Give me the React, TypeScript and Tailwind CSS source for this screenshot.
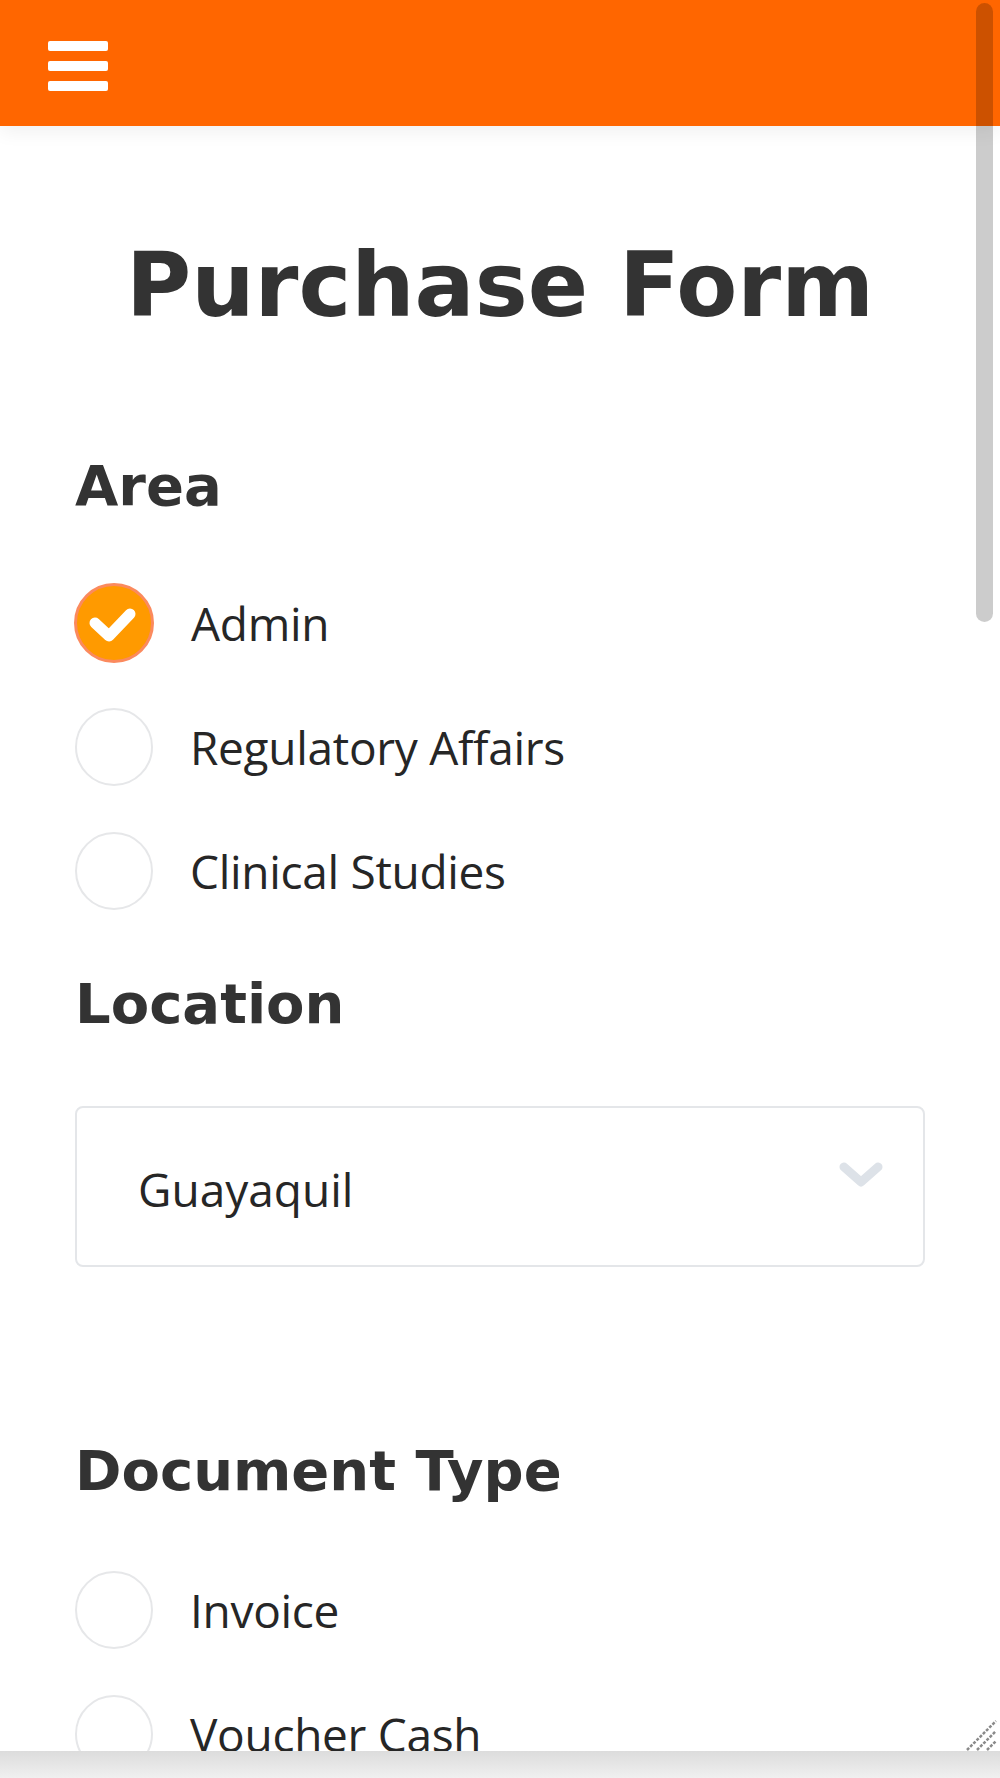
import React, { useState } from 'react';

const areas = ['Admin', 'Regulatory Affairs', 'Clinical Studies'];
const docTypes = ['Invoice', 'Voucher Cash'];

const headingFont = { fontFamily: '"DejaVu Sans", sans-serif' };
const bodyFont = { fontFamily: '"Open Sans", "Noto Sans", sans-serif' };

const Radio: React.FC<{ label: string; checked: boolean; onClick: () => void }> = ({ label, checked, onClick }) => (
  <div className="flex items-center h-[78px] cursor-pointer" onClick={onClick}>
    {checked ? (
      <div className="w-[80px] h-[80px] -ml-px rounded-full bg-[#ff9a00] border-[3px] border-[#fb8a5e] flex items-center justify-center shrink-0">
        <svg width="80" height="80" viewBox="0 0 80 80" className="-m-[3px]">
          <path d="M21 40 L35 53 L56 31" fill="none" stroke="#fff" strokeWidth="11" strokeLinecap="round" strokeLinejoin="round" />
        </svg>
      </div>
    ) : (
      <div className="w-[78px] h-[78px] rounded-full border-2 border-[#e6e7e9] bg-white shrink-0" />
    )}
    <span className="ml-[37px] text-[46px] leading-[46px] text-[#262626] tracking-[-0.3px]" style={bodyFont}>
      {label}
    </span>
  </div>
);

export default function App() {
  const [area, setArea] = useState('Admin');
  const [docType, setDocType] = useState('');

  return (
    <div className="w-[1000px] h-[1778px] flex flex-col overflow-hidden bg-white">
      <div className="relative flex-1 overflow-hidden">
        {/* Top bar */}
        <header className="h-[126px] bg-[#ff6600] pl-[48px] pt-[41px] shadow-[0_6px_18px_rgba(0,0,0,0.06)] relative z-10">
          <div className="flex flex-col gap-[10px] w-[60px]">
            <div className="h-[10px] bg-white rounded-[2px]" />
            <div className="h-[10px] bg-white rounded-[2px]" />
            <div className="h-[10px] bg-white rounded-[2px]" />
          </div>
        </header>

        <main className="px-[75px]">
          <h1 className="mt-[115px] text-center text-[89px] leading-none font-bold text-[#333]" style={headingFont}>
            Purchase Form
          </h1>

          {/* Area */}
          <h2 className="mt-[128px] text-[56px] leading-none font-bold text-[#333]" style={headingFont}>
            Area
          </h2>
          <div className="mt-[70px] flex flex-col gap-[46px]">
            {areas.map((a) => (
              <Radio key={a} label={a} checked={area === a} onClick={() => setArea(a)} />
            ))}
          </div>

          {/* Location */}
          <h2 className="mt-[66px] text-[56px] leading-none font-bold text-[#333]" style={headingFont}>
            Location
          </h2>
          <div className="mt-[74px] h-[161px] border-2 border-[#e4e6e9] rounded-[8px] flex items-start justify-between pl-[61px] pr-[40px]">
            <span className="mt-[58px] text-[46px] leading-[46px] text-[#262626]" style={bodyFont}>
              Guayaquil
            </span>
            <svg width="44" height="25" viewBox="0 0 44 25" className="mt-[54px]">
              <path d="M5 5 L22 20 L39 5" fill="none" stroke="#dde2e8" strokeWidth="9" strokeLinecap="round" strokeLinejoin="round" />
            </svg>
          </div>

          {/* Document Type */}
          <h2 className="mt-[176px] text-[56px] leading-none font-bold text-[#333]" style={headingFont}>
            Document Type
          </h2>
          <div className="mt-[72px] flex flex-col gap-[46px]">
            {docTypes.map((d) => (
              <Radio key={d} label={d} checked={docType === d} onClick={() => setDocType(d)} />
            ))}
          </div>
        </main>

        {/* scrollbar thumb */}
        <div className="absolute top-[3px] left-[976px] w-[17px] h-[619px] rounded-full bg-black/20 z-20" />

        {/* resize grip */}
        <svg className="absolute right-[3px] bottom-0 z-20" width="32" height="32" viewBox="0 0 32 32">
          <path d="M2 31 L31 2 M12 31 L31 12 M22 31 L31 22" stroke="#8a8a8a" strokeWidth="2.5" strokeDasharray="3 1.5" />
        </svg>
      </div>

      {/* bottom bar */}
      <div className="h-[27px] shrink-0 bg-gradient-to-b from-[#dcdcdc] to-[#f0f0f0]" />
    </div>
  );
}
